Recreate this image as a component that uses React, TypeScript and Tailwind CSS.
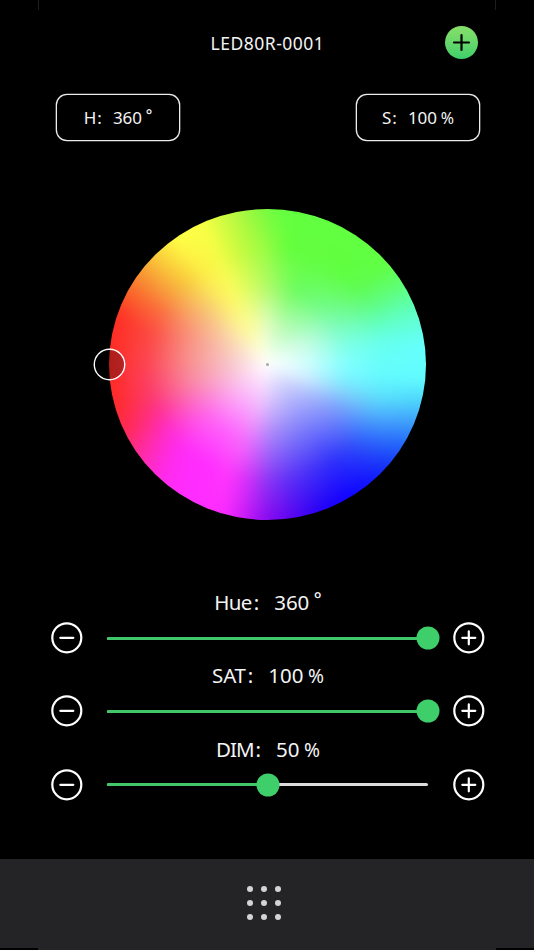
import { useState } from "react";

type Stop = [color: string, angle: number];

// color rings from the rim inwards, radius is a share of the wheel's radius
const RINGS: { radius: number; stops: Stop[] }[] = [
  {
    radius: 100,
    stops: [
      ["#74fb40", 0], ["#62ff40", 6], ["#62ff42", 50], ["#5eff78", 60], ["#5cffb0", 67],
      ["#62ffdc", 75], ["#66ffff", 83], ["#62fdff", 95], ["#50dcfc", 102], ["#3fa8fc", 110],
      ["#2468fa", 120], ["#1434f8", 130], ["#1010ff", 140], ["#1000ff", 150], ["#2400f6", 160],
      ["#5503f0", 170], ["#8808f0", 180], ["#d41df8", 190], ["#ff2cff", 197], ["#ff2cff", 215],
      ["#ff2ae0", 225], ["#ff2c9c", 235], ["#ff2a50", 245], ["#ff2a28", 255], ["#ff2a22", 270],
      ["#fe2e24", 288], ["#fb5525", 295], ["#f79030", 305], ["#fcd23c", 315], ["#ffff46", 324],
      ["#fbff44", 335], ["#c4fb42", 345], ["#a0f840", 352],
    ],
  },
  {
    radius: 75,
    stops: [
      ["#94fc42", 0], ["#64fe3e", 10], ["#60fe40", 40], ["#5efc50", 50], ["#60fc80", 60],
      ["#62ffc0", 70], ["#66fff0", 80], ["#64fcff", 95], ["#5ce4fc", 105], ["#50b0fc", 115],
      ["#3878fc", 125], ["#3048fa", 135], ["#2c30fa", 145], ["#3c2cf8", 155], ["#6030f6", 170],
      ["#8c34f4", 180], ["#d430f8", 190], ["#ff36fc", 200], ["#ff2cff", 212], ["#ff2cf8", 225],
      ["#ff2cd4", 235], ["#ff3090", 247], ["#fc3c70", 255], ["#fc4656", 270], ["#fc4c44", 285],
      ["#fa7040", 297], ["#f89c40", 305], ["#f8c83c", 315], ["#fdee44", 325], ["#f6fc46", 335],
      ["#ccfb40", 345],
    ],
  },
  {
    radius: 50,
    stops: [
      ["#b0fb68", 0], ["#6cfc60", 20], ["#70fc80", 40], ["#7cfcb8", 60], ["#80ffe4", 75],
      ["#80ffff", 90], ["#7cf4ff", 100], ["#84d4fc", 110], ["#80a8fc", 120], ["#7c8cfc", 130],
      ["#7478fc", 145], ["#7c74fa", 160], ["#9878fa", 175], ["#c474fc", 185], ["#f070fc", 195],
      ["#fc64fc", 205], ["#ff60fc", 215], ["#ff64ec", 230], ["#fc74c4", 245], ["#fa84a8", 255],
      ["#f88e90", 270], ["#f89884", 290], ["#f8b47c", 305], ["#f8d074", 315], ["#fcec64", 325],
      ["#fafc60", 335], ["#dcfc60", 345],
    ],
  },
  {
    radius: 25,
    stops: [
      ["#e0fcc4", 0], ["#bcfcb4", 20], ["#b8fcc4", 40], ["#ccfce4", 60], ["#d0ffff", 90],
      ["#d0ecff", 110], ["#bcc4fc", 130], ["#b8b8fc", 150], ["#d0bcfc", 172], ["#f0c0fc", 190],
      ["#fcb4fc", 212], ["#fab8ec", 235], ["#f8c0cc", 265], ["#f8ccbc", 290], ["#fce4b0", 310],
      ["#fcfa9c", 328], ["#f8fca8", 342],
    ],
  },
  { radius: 0, stops: [["#ffffff", 0]] },
];

// the blurred layers reach past the rim, so their radii shrink by as much
const OVERSCAN = 0.93;

function conic(stops: Stop[]) {
  const list = stops.map(([color, angle]) => `${color} ${angle}deg`).join(", ");
  return `conic-gradient(${list}, ${stops[0][0]} 360deg)`;
}

function fade(radius: number) {
  if (radius === 100) return undefined;
  const from = radius * OVERSCAN;
  const to = (radius + 25) * OVERSCAN;
  return `radial-gradient(closest-side, #000 ${from}%, transparent ${to}%)`;
}

function ColorWheel() {
  return (
    <div className="relative grid h-[311px] w-[317px]">
      <div className="grid overflow-hidden rounded-[50%] [grid-area:1/1]">
        <div className="-m-3 grid blur-[6px]">
          {RINGS.map((ring) => (
            <div
              key={ring.radius}
              className="[grid-area:1/1]"
              style={{ backgroundImage: conic(ring.stops), maskImage: fade(ring.radius) }}
            />
          ))}
        </div>
      </div>
      <span className="relative size-[3px] place-self-center rounded-full bg-[#a8a8a8] [grid-area:1/1]" />
      <span className="absolute top-[141px] -left-3.5 size-[29px] rounded-full bg-black/30 shadow-[0_0_0_1.4px_#fff]" />
    </div>
  );
}

function RoundButton({ plus, onClick }: { plus?: boolean; onClick: () => void }) {
  return (
    <button onClick={onClick} aria-label={plus ? "plus" : "minus"} className="size-8 shrink-0">
      <svg viewBox="0 0 32 32" className="size-8" fill="none" stroke="white" strokeLinecap="round">
        <circle cx="15.8" cy="15.8" r="14.5" strokeWidth="2.2" />
        <path d={plus ? "M9.3 15.8h13M15.8 9.3v13" : "M9.3 15.8h13"} strokeWidth="2.2" />
      </svg>
    </button>
  );
}

function Unit({ unit }: { unit: string }) {
  if (unit === "°") return <span className="relative bottom-[0.22em] ml-[0.24em] text-[0.9em] font-medium">°</span>;
  return <span className="ml-[0.23em] text-[0.94em]">{unit}</span>;
}

type SliderProps = {
  label: string;
  tracking: string;
  value: number;
  max: number;
  unit: string;
  onChange: (value: number) => void;
};

function SliderRow({ label, tracking, value, max, unit, onChange }: SliderProps) {
  const pct = (value / max) * 100;
  const step = (d: number) => onChange(Math.min(max, Math.max(0, value + d)));

  return (
    <div className="h-[73.3px]">
      <div className="flex h-[38px] items-baseline justify-center gap-[15px] text-[20.5px] leading-[36px]">
        <span className="flex gap-0.5">
          <span className={tracking}>{label}</span>:
        </span>
        <span>
          {value}
          <Unit unit={unit} />
        </span>
      </div>
      <div className="flex h-8 items-center">
        <RoundButton onClick={() => step(-1)} />
        <div className="relative mr-[25px] ml-6 h-[3px] flex-1 rounded-full bg-[#dcdcdc]">
          <div className="h-full rounded-full bg-[#42c66a]" style={{ width: `${pct}%` }} />
          <span
            className="absolute top-1/2 size-[23px] -translate-1/2 rounded-full bg-[#3ecf6b]"
            style={{ left: `${pct}%` }}
          />
        </div>
        <RoundButton plus onClick={() => step(1)} />
      </div>
    </div>
  );
}

function ValueBox({ label, value, unit }: { label: string; value: number; unit: string }) {
  return (
    <div className="flex h-[45px] w-[122px] items-baseline justify-center gap-[11px] rounded-[10px] text-[17px] leading-[45px] shadow-[0_0_0_1.3px_#ececec]">
      <span className="flex gap-px">
        <span>{label}</span>:
      </span>
      <span>
        {value}
        <Unit unit={unit} />
      </span>
    </div>
  );
}

export default function App() {
  const [hue, setHue] = useState(360);
  const [sat, setSat] = useState(100);
  const [dim, setDim] = useState(50);

  return (
    <main className="relative flex h-[950px] w-[534px] flex-col overflow-hidden bg-black font-['Noto_Sans',sans-serif] text-[#f4f4f4]">
      <span className="absolute top-0 left-[38px] h-2.5 w-px bg-[#1e1e1e]" />
      <span className="absolute top-0 left-[495px] h-2.5 w-px bg-[#1e1e1e]" />

      <header className="grid h-[95px] grid-cols-[1fr_auto_1fr] items-center px-14 pb-2.5">
        <h1 className="col-start-2 pt-0.5 pl-px text-[17.5px] leading-none tracking-[0.5px]">LED80R-0001</h1>
        <button
          aria-label="add"
          className="size-[33px] justify-self-end rounded-full bg-linear-to-b from-[#87e06a] to-[#3bcf6b]"
        >
          <svg viewBox="0 0 33 33" className="size-[33px]" fill="none" stroke="black" strokeWidth="2.2" strokeLinecap="round">
            <path d="M9 16.5h15M16.5 9v15" />
          </svg>
        </button>
      </header>

      <div className="flex justify-between pr-[55px] pl-[57px]">
        <ValueBox label="H" value={hue} unit="°" />
        <ValueBox label="S" value={sat} unit="%" />
      </div>

      <div className="mt-[69px] flex justify-center pl-px">
        <ColorWheel />
      </div>

      <section className="mt-[64px] pr-[49px] pl-[51px]">
        <SliderRow label="Hue" tracking="tracking-[-0.7px]" value={hue} max={360} unit="°" onChange={setHue} />
        <SliderRow label="SAT" tracking="tracking-[-0.2px]" value={sat} max={100} unit="%" onChange={setSat} />
        <SliderRow label="DIM" tracking="tracking-[-1px]" value={dim} max={100} unit="%" onChange={setDim} />
      </section>

      <footer className="mt-auto flex h-[91px] flex-col bg-[#242426]">
        <div className="flex flex-1 items-center justify-center pr-[7px] pb-px">
          <div className="grid grid-cols-3 gap-2">
            {Array.from({ length: 9 }, (_, i) => (
              <span key={i} className="size-1.5 rounded-full bg-[#d4d4d6]" />
            ))}
          </div>
        </div>
        <div className="flex h-0.5 justify-between">
          <span className="w-[38px] bg-black" />
          <span className="w-[38px] bg-black" />
        </div>
      </footer>
    </main>
  );
}
